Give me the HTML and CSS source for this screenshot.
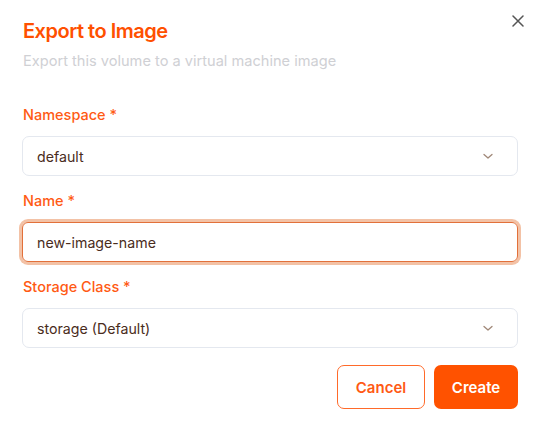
FILE: index.html
```html
<!DOCTYPE html>
<html>
<head>
<meta charset="utf-8">
<link rel="stylesheet" href="styles.css">
</head>
<body>
<div class="dialog">
  <button class="close" aria-label="Close">
    <svg width="12" height="12" viewBox="0 0 12 12"><path d="M1 1L11 11M11 1L1 11" stroke="#555" stroke-width="1.5" fill="none" stroke-linecap="round"/></svg>
  </button>
  <div class="header">
    <h2 class="title">Export to Image</h2>
    <p class="subtitle">Export this volume to a virtual machine image</p>
  </div>
  <div class="form">
    <div class="field">
      <label class="label">Namespace *</label>
      <div class="select">
        <span class="value">default</span>
        <svg class="chev" width="12" height="12" viewBox="0 0 12 12"><path d="M2 4.5L6 8L10 4.5" stroke="#a08878" stroke-width="1.3" fill="none" stroke-linecap="round" stroke-linejoin="round"/></svg>
      </div>
    </div>
    <div class="field">
      <label class="label">Name *</label>
      <div class="input focused"><span class="value">new-image-name</span></div>
    </div>
    <div class="field">
      <label class="label">Storage Class *</label>
      <div class="select">
        <span class="value">storage (Default)</span>
        <svg class="chev" width="12" height="12" viewBox="0 0 12 12"><path d="M2 4.5L6 8L10 4.5" stroke="#a08878" stroke-width="1.3" fill="none" stroke-linecap="round" stroke-linejoin="round"/></svg>
      </div>
    </div>
  </div>
  <div class="actions">
    <button class="btn btn-outline">Cancel</button>
    <button class="btn btn-primary">Create</button>
  </div>
</div>
</body>
</html>
```
FILE: styles.css
```css
* { box-sizing: border-box; }
html, body { margin: 0; padding: 0; background: #fff; }
body { font-family: Inter, "Noto Sans", sans-serif; color: #4a2c1c; }
.dialog {
  position: relative;
  width: 539px;
  height: 448px;
  padding: 17px 21px 0 22px;
}
.close {
  position: absolute;
  top: 15px;
  right: 15px;
  width: 12px;
  height: 12px;
  padding: 0;
  border: 0;
  background: none;
  display: flex;
}
.header { padding-left: 1px; }
.title {
  margin: 0;
  font-size: 20px;
  line-height: 28px;
  font-weight: 600;
  color: #ff5000;
  letter-spacing: -0.5px;
}
.subtitle {
  margin: 6px 0 0;
  font-size: 14.6px;
  line-height: 20px;
  color: #cfd0d4;
}
.form {
  margin-top: 34px;
  display: flex;
  flex-direction: column;
  gap: 15px;
}
.field { display: flex; flex-direction: column; gap: 11px; }
.label {
  padding-left: 1px;
  font-size: 14.5px;
  line-height: 20px;
  font-weight: 500;
  color: #ff5a14;
}
.select, .input {
  height: 40px;
  border: 1px solid #e4e8ef;
  border-radius: 7px;
  display: flex;
  align-items: center;
  justify-content: space-between;
  padding: 0 23px 0 14px;
  font-size: 14.2px;
}
.input.focused {
  border: 1.5px solid #e2703a;
  box-shadow: 0 0 0 3px #f3c2a6;
  border-radius: 6px;
}
.value { color: #4a2c1c; }
.chev { flex: none; }
.actions {
  margin-top: 17px;
  display: flex;
  justify-content: flex-end;
  gap: 9px;
}
.btn {
  height: 44px;
  border-radius: 7px;
  font-family: Inter, "Noto Sans", sans-serif;
  font-size: 15px;
  font-weight: 600;
  padding: 0;
}
.btn-outline {
  width: 88px;
  background: #fff;
  border: 1px solid #ff6a2a;
  color: #ff5a14;
}
.btn-primary {
  width: 84px;
  background: #ff5200;
  border: 0;
  color: #fff;
}
```
